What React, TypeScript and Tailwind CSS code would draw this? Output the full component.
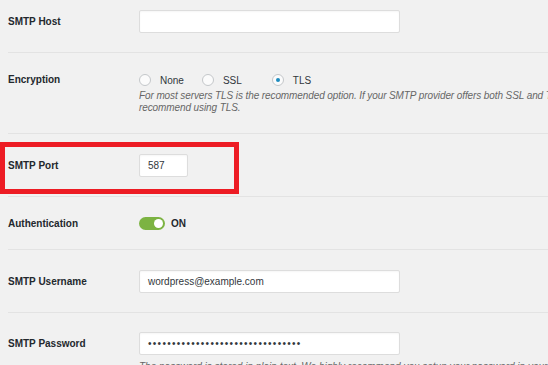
import React from 'react';

const labelCls = "w-[131px] shrink-0 text-[10px] font-bold text-[#23282d]";
const inputCls =
  "h-[23px] rounded-[2px] border border-[#dddddd] bg-white pl-[8px] text-[10px] leading-[21px] text-[#32373c] shadow-[inset_0_1px_2px_rgba(0,0,0,0.04)]";

function Radio({ label, checked }: { label: string; checked?: boolean }) {
  return (
    <div className="flex items-center">
      <span className="flex h-[12px] w-[12px] items-center justify-center rounded-full border border-[#c4c7ca] bg-[#fbfbfb]">
        {checked && <span className="h-[4px] w-[4px] rounded-full bg-[#1e8cbe]" />}
      </span>
      <span className="ml-[9px] text-[10px] text-[#32373c]">{label}</span>
    </div>
  );
}

export default function App() {
  return (
    <div className="relative h-[365px] w-[548px] overflow-hidden bg-[#f1f1f1] font-['Liberation_Sans',Arial,sans-serif]">
      <div className="pl-2">
        {/* SMTP Host */}
        <div className="flex h-[53px] items-start border-b border-[#e3e3e3] pt-[10px]">
          <div className={`${labelCls} leading-[23px]`}>SMTP Host</div>
          <div className={`${inputCls} w-[261px]`} />
        </div>

        {/* Encryption */}
        <div className="flex h-[81px] items-start border-b border-[#e3e3e3] pt-[20px]">
          <div className={`${labelCls} leading-[14px]`}>Encryption</div>
          <div className="min-w-0 flex-1">
            <div className="flex h-[14px] items-center">
              <Radio label="None" />
              <div className="ml-[18px]"><Radio label="SSL" /></div>
              <div className="ml-[30px]"><Radio label="TLS" checked /></div>
            </div>
            <p className="mt-[3px] whitespace-nowrap text-[10px] italic leading-[12px] tracking-[-0.1px] text-[#666]">
              For most servers TLS is the recommended option. If your SMTP provider offers both SSL and TLS options, we
              <br />
              recommend using TLS.
            </p>
          </div>
        </div>

        {/* SMTP Port */}
        <div className="flex h-[63px] items-center border-b border-[#e3e3e3]">
          <div className={labelCls}>SMTP Port</div>
          <div className={`${inputCls} w-[49px]`}>587</div>
        </div>

        {/* Authentication */}
        <div className="flex h-[53px] items-center border-b border-[#e3e3e3]">
          <div className={labelCls}>Authentication</div>
          <div className="flex items-center">
            <span className="flex h-[13px] w-[26px] items-center justify-end rounded-full bg-[#7cb342] pr-[2px]">
              <span className="h-[9px] w-[9px] rounded-full bg-white" />
            </span>
            <span className="ml-[6px] text-[10px] font-bold text-[#23282d]">ON</span>
          </div>
        </div>

        {/* SMTP Username */}
        <div className="flex h-[63px] items-center border-b border-[#e3e3e3]">
          <div className={labelCls}>SMTP Username</div>
          <div className={`${inputCls} w-[261px]`}>wordpress@example.com</div>
        </div>

        {/* SMTP Password */}
        <div className="flex items-start pt-[19px]">
          <div className={`${labelCls} leading-[23px]`}>SMTP Password</div>
          <div className="min-w-0 flex-1">
            <div className={`${inputCls} w-[261px] tracking-[1.3px]`}>
              ••••••••••••••••••••••••••••••••
            </div>
            <p className="mt-[6px] whitespace-nowrap text-[10px] italic leading-[12px] text-[#666]">
              The password is stored in plain text. We highly recommend you setup your password in your WordPress configuration file.
            </p>
          </div>
        </div>
      </div>

      {/* annotation */}
      <div className="absolute left-0 top-[142px] h-[52px] w-[239px] border-[5px] border-[#ed1c24]" />
    </div>
  );
}
